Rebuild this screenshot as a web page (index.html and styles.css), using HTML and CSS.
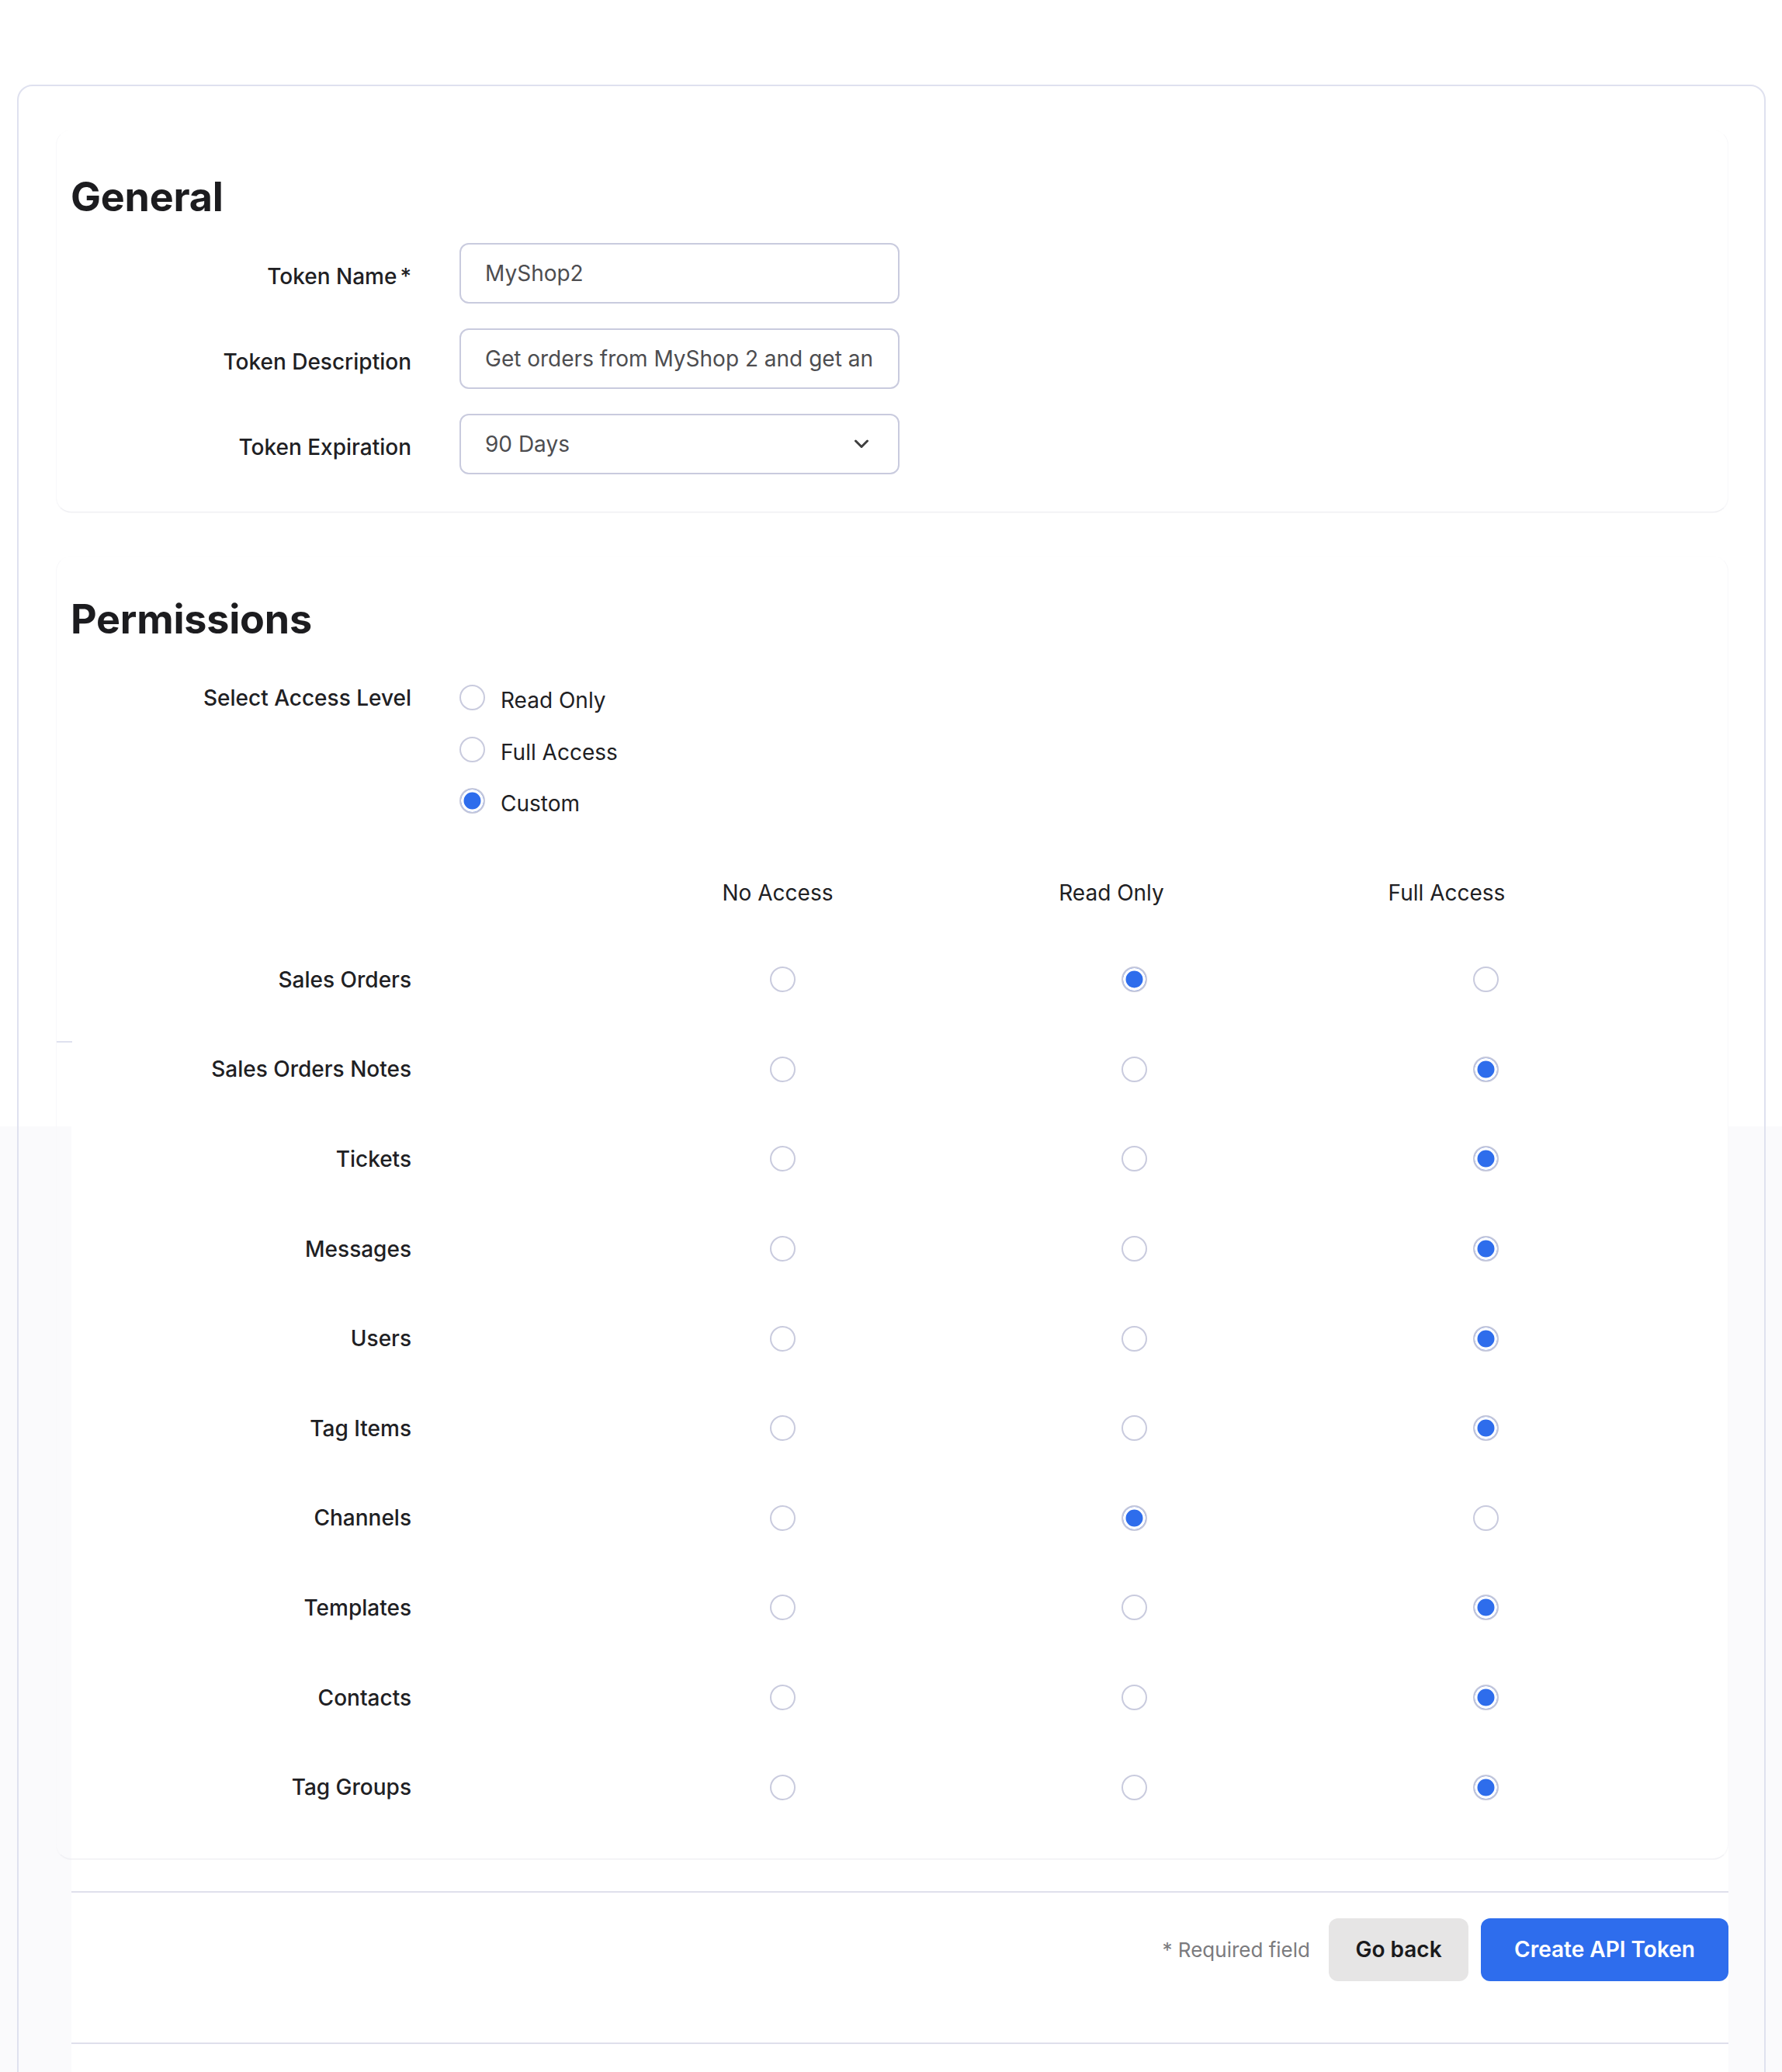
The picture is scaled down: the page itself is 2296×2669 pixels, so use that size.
FILE: index.html
```html
<!DOCTYPE html>
<html lang="en">
<head>
<meta charset="utf-8">
<title>Create API Token</title>
<link rel="stylesheet" href="styles.css">
</head>
<body>
<div class="card">
  <section class="panel general">
    <h2 class="title">General</h2>
    <div class="form">
      <div class="row">
        <div class="label">Token Name<span class="req">*</span></div>
        <div class="field"><span class="value">MyShop2</span></div>
      </div>
      <div class="row">
        <div class="label">Token Description</div>
        <div class="field"><span class="value">Get orders from MyShop 2 and get an</span></div>
      </div>
      <div class="row">
        <div class="label">Token Expiration</div>
        <div class="field select"><span class="value">90 Days</span>
          <svg class="chev" width="20" height="12" viewBox="0 0 20 12"><path d="M2.5 2 L10 9.5 L17.5 2" fill="none" stroke="#3f3f3f" stroke-width="3" stroke-linecap="round" stroke-linejoin="round"/></svg>
        </div>
      </div>
    </div>
  </section>

  <section class="panel perms">
    <h2 class="title">Permissions</h2>
    <div class="access">
      <div class="label">Select Access Level</div>
      <div class="options">
        <div class="option"><span class="radio"></span><span>Read Only</span></div>
        <div class="option"><span class="radio"></span><span>Full Access</span></div>
        <div class="option"><span class="radio on"></span><span>Custom</span></div>
      </div>
    </div>
    <div class="heads">
      <div class="head-spacer"></div>
      <div class="head">No Access</div>
      <div class="head">Read Only</div>
      <div class="head">Full Access</div>
    </div>
    <div class="grid">
      <div class="prow"><div class="plabel">Sales Orders</div><div class="cell"><span class="radio"></span></div><div class="cell"><span class="radio on"></span></div><div class="cell"><span class="radio"></span></div></div>
      <div class="prow"><div class="plabel">Sales Orders Notes</div><div class="cell"><span class="radio"></span></div><div class="cell"><span class="radio"></span></div><div class="cell"><span class="radio on"></span></div></div>
      <div class="prow"><div class="plabel">Tickets</div><div class="cell"><span class="radio"></span></div><div class="cell"><span class="radio"></span></div><div class="cell"><span class="radio on"></span></div></div>
      <div class="prow"><div class="plabel">Messages</div><div class="cell"><span class="radio"></span></div><div class="cell"><span class="radio"></span></div><div class="cell"><span class="radio on"></span></div></div>
      <div class="prow"><div class="plabel">Users</div><div class="cell"><span class="radio"></span></div><div class="cell"><span class="radio"></span></div><div class="cell"><span class="radio on"></span></div></div>
      <div class="prow"><div class="plabel">Tag Items</div><div class="cell"><span class="radio"></span></div><div class="cell"><span class="radio"></span></div><div class="cell"><span class="radio on"></span></div></div>
      <div class="prow"><div class="plabel">Channels</div><div class="cell"><span class="radio"></span></div><div class="cell"><span class="radio on"></span></div><div class="cell"><span class="radio"></span></div></div>
      <div class="prow"><div class="plabel">Templates</div><div class="cell"><span class="radio"></span></div><div class="cell"><span class="radio"></span></div><div class="cell"><span class="radio on"></span></div></div>
      <div class="prow"><div class="plabel">Contacts</div><div class="cell"><span class="radio"></span></div><div class="cell"><span class="radio"></span></div><div class="cell"><span class="radio on"></span></div></div>
      <div class="prow"><div class="plabel">Tag Groups</div><div class="cell"><span class="radio"></span></div><div class="cell"><span class="radio"></span></div><div class="cell"><span class="radio on"></span></div></div>
    </div>
  </section>

  <footer class="footer">
    <span class="required">* Required field</span>
    <button class="btn back">Go back</button>
    <button class="btn primary">Create API Token</button>
  </footer>
</div>
</body>
</html>
```

FILE: styles.css
```css
* { box-sizing: border-box; }

html, body {
  margin: 0;
  height: 2669px;
  overflow: hidden;
}

body {
  font-family: Inter, "Noto Sans", "Liberation Sans", sans-serif;
  color: #1f1f22;
  background: linear-gradient(to bottom, #ffffff 0, #ffffff 1451px, #fafafc 1451px, #fafafc 100%);
}

.card {
  margin: 109px 0 0 22px;
  width: 2253px;
  height: 2700px;
  border: 2px solid #dfe1ef;
  border-radius: 20px;
  padding: 56px 46px 0 48px;
  background: linear-gradient(90deg, transparent 68px, #ffffff 68px, #ffffff 2203px, transparent 2203px) 0 0 / 100% 2610px no-repeat;
}

.panel {
  border: 1px solid #f8f8fa;
  border-top-color: #fefefe;
  border-bottom-color: #efeff3;
  border-radius: 20px;
  box-shadow: 0 1px 1px rgba(20, 20, 60, 0.03);
}

.general {
  background: #fff;
  padding: 55px 0 48px 20px;
}

.title {
  margin: 0 0 0 -2px;
  font-size: 52px;
  line-height: 62px;
  font-weight: 700;
  color: #1c1c1f;
  letter-spacing: -0.2px;
}

.form {
  margin-top: 28px;
  display: flex;
  flex-direction: column;
  gap: 32px;
}

.row {
  display: flex;
  align-items: center;
}

.label {
  width: 437px;
  text-align: right;
  font-size: 28px;
  line-height: 40px;
  font-weight: 500;
  color: #202023;
}

.row .label { padding-top: 7px; }

.req { margin-left: 4px; }

.field {
  margin-left: 62px;
  width: 567px;
  height: 78px;
  border: 2px solid #c9cbde;
  border-radius: 12px;
  padding: 0 33px 0 31px;
  display: flex;
  align-items: center;
  font-size: 28px;
  color: #4d4d50;
  background: #fff;
}

.value {
  flex: 1;
  overflow: hidden;
  white-space: nowrap;
}

.select { padding-right: 37px; }
.chev { flex: none; display: block; }

.perms {
  margin-top: 56px;
  padding: 50px 0 34px 20px;
  background: linear-gradient(#dfe1ef, #dfe1ef) 0 624px / 20px 2px no-repeat;
}

.access {
  margin-top: 50px;
  display: flex;
  align-items: flex-start;
}

.options {
  margin-left: 62px;
  padding-top: 3px;
  display: flex;
  flex-direction: column;
  gap: 26.5px;
}

.option {
  display: flex;
  align-items: flex-start;
  gap: 20px;
  font-size: 28px;
  line-height: 40px;
  color: #202023;
}

.radio {
  flex: none;
  display: block;
  width: 33px;
  height: 33px;
  border: 2px solid #c9cbde;
  border-radius: 50%;
  background: #fff;
}

.radio.on {
  background: #2e6dec;
  box-shadow: inset 0 0 0 3.5px #fff;
  border-color: #c4c7db;
}

.heads {
  margin-top: 75px;
  display: flex;
}

.head-spacer { width: 694px; }

.head {
  width: 430px;
  text-align: center;
  font-size: 28px;
  line-height: 40px;
  color: #202023;
}

.head:last-child { padding-left: 4px; }

.grid {
  margin-top: 34px;
  display: flex;
  flex-direction: column;
}

.prow {
  height: 115.6px;
  display: flex;
  align-items: center;
}

.plabel {
  width: 688.5px;
  padding-right: 251.5px;
  text-align: right;
  font-size: 28px;
  line-height: 40px;
  font-weight: 500;
  color: #202023;
}

.cell {
  width: 453px;
  display: flex;
  justify-content: center;
}

.footer {
  margin: 41px 0 0 20px;
  background: #fff;
  border-top: 2px solid #dfe0ec;
  border-bottom: 2px solid #dfe0ec;
  padding: 33px 0 79px 0;
  display: flex;
  justify-content: flex-end;
  align-items: center;
}

.required {
  font-size: 26px;
  color: #7b7b7e;
  margin-right: 24px;
}

.btn {
  height: 81px;
  border: none;
  border-radius: 12px;
  font-family: Inter, "Noto Sans", "Liberation Sans", sans-serif;
  font-size: 28px;
  font-weight: 600;
  cursor: pointer;
}

.back {
  width: 180px;
  background: #e6e5e5;
  color: #1a1a1c;
}

.primary {
  width: 319px;
  margin-left: 16px;
  background: #2e6ded;
  color: #fff;
}
```
